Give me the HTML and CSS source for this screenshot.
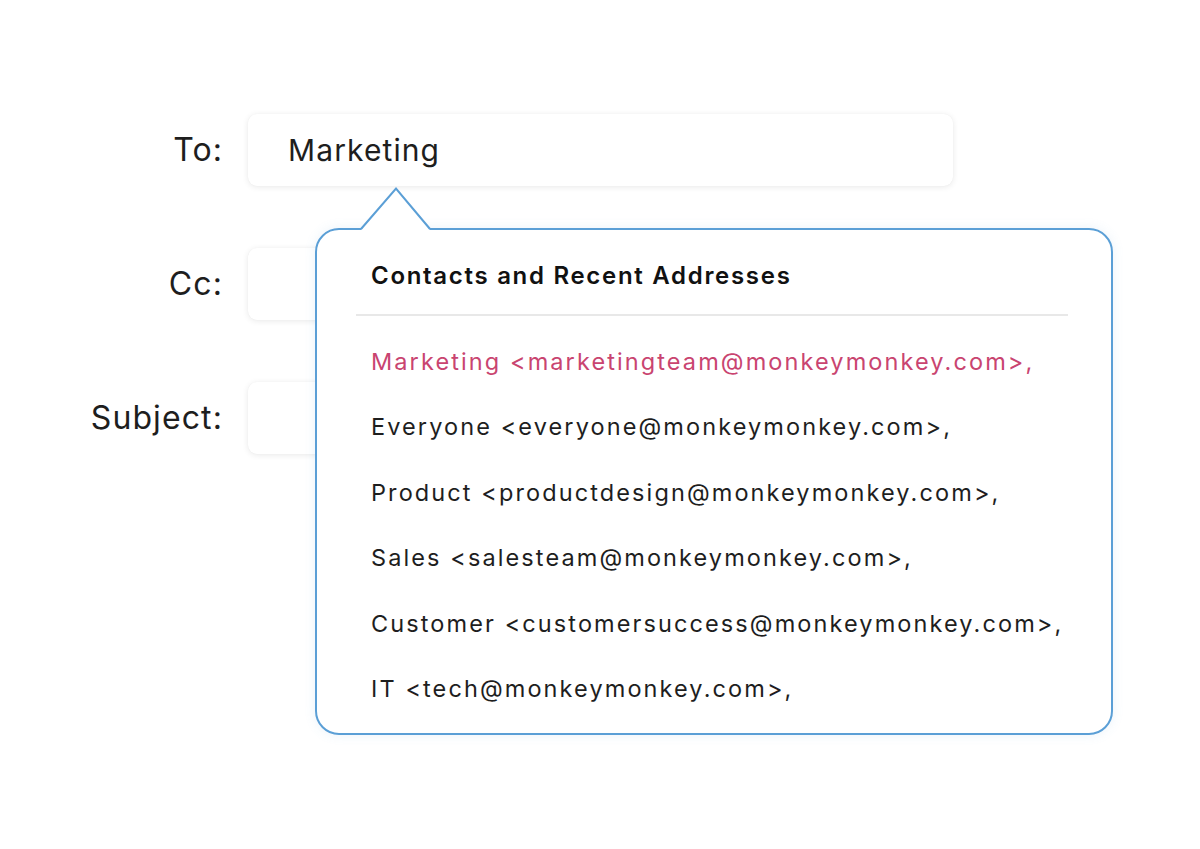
FILE: index.html
```html
<!DOCTYPE html>
<html lang="en">
<head>
<meta charset="utf-8">
<title>Compose</title>
<link rel="stylesheet" href="styles.css">
</head>
<body>
<div class="page">
  <div class="form">
    <div class="label">To:</div>
    <div class="field"><span class="value">Marketing</span></div>
    <div class="label">Cc:</div>
    <div class="field"></div>
    <div class="label">Subject:</div>
    <div class="field"></div>
  </div>
  <div class="popover">
    <svg class="arrow" width="80" height="46" viewBox="0 0 80 46">
      <polygon points="0,44 35,2.5 69,44" fill="#ffffff"/>
      <polyline points="0,43 35,2.5 69,43" fill="none" stroke="#5b9fd6" stroke-width="2" stroke-linejoin="miter"/>
    </svg>
    <div class="pop-head">Contacts and Recent Addresses</div>
    <ul class="list">
      <li class="item active">Marketing &lt;marketingteam@monkeymonkey.com&gt;,</li>
      <li class="item">Everyone &lt;everyone@monkeymonkey.com&gt;,</li>
      <li class="item">Product &lt;productdesign@monkeymonkey.com&gt;,</li>
      <li class="item">Sales &lt;salesteam@monkeymonkey.com&gt;,</li>
      <li class="item">Customer &lt;customersuccess@monkeymonkey.com&gt;,</li>
      <li class="item">IT &lt;tech@monkeymonkey.com&gt;,</li>
    </ul>
  </div>
</div>
</body>
</html>
```
FILE: styles.css
```css
* { box-sizing: border-box; }
html, body { margin: 0; padding: 0; background: #ffffff; }
body {
  font-family: "Inter", "Open Sans", "Liberation Sans", sans-serif;
  color: #1b1b1b;
  width: 1200px;
  height: 849px;
  overflow: hidden;
}
.page {
  position: relative;
  width: 1200px;
  height: 849px;
  padding-top: 114px;
}
.form {
  display: grid;
  grid-template-columns: 222px 705px;
  column-gap: 26px;
  row-gap: 62px;
  grid-auto-rows: 72px;
}
.label {
  text-align: right;
  font-size: 32px;
  font-weight: 400;
  line-height: 72px;
  color: #1e1e1e;
  letter-spacing: 1.1px;
  margin-right: -1px;
}
.field {
  background: #ffffff;
  border-radius: 9px;
  box-shadow: 0 1px 6px rgba(0, 0, 0, 0.09), 0 0 1px rgba(0, 0, 0, 0.06);
  padding-left: 40px;
  display: flex;
  align-items: center;
}
.value {
  font-size: 30px;
  font-weight: 400;
  letter-spacing: 1.1px;
  color: #1e1e1e;
}
.popover {
  position: absolute;
  left: 315px;
  top: 228px;
  width: 798px;
  height: 507px;
  background: #ffffff;
  border: 2px solid #5b9fd6;
  border-radius: 24px;
  box-shadow: 0 0 12px rgba(91, 159, 214, 0.12);
  padding: 0 43px 0 39px;
}
.arrow {
  position: absolute;
  left: 44px;
  top: -44px;
  overflow: visible;
}
.pop-head {
  font-weight: 600;
  font-size: 24px;
  line-height: 28px;
  letter-spacing: 1.7px;
  padding: 32px 0 24px 15px;
  border-bottom: 2px solid #e8e8e8;
  color: #111111;
}
.list {
  list-style: none;
  margin: 0;
  padding: 13px 0 0 15px;
}
.item {
  height: 65.4px;
  line-height: 65.4px;
  font-size: 23.5px;
  font-weight: 400;
  letter-spacing: 2.1px;
  color: #1e1e1e;
  white-space: nowrap;
}
.item.active { color: #c94470; }
```
